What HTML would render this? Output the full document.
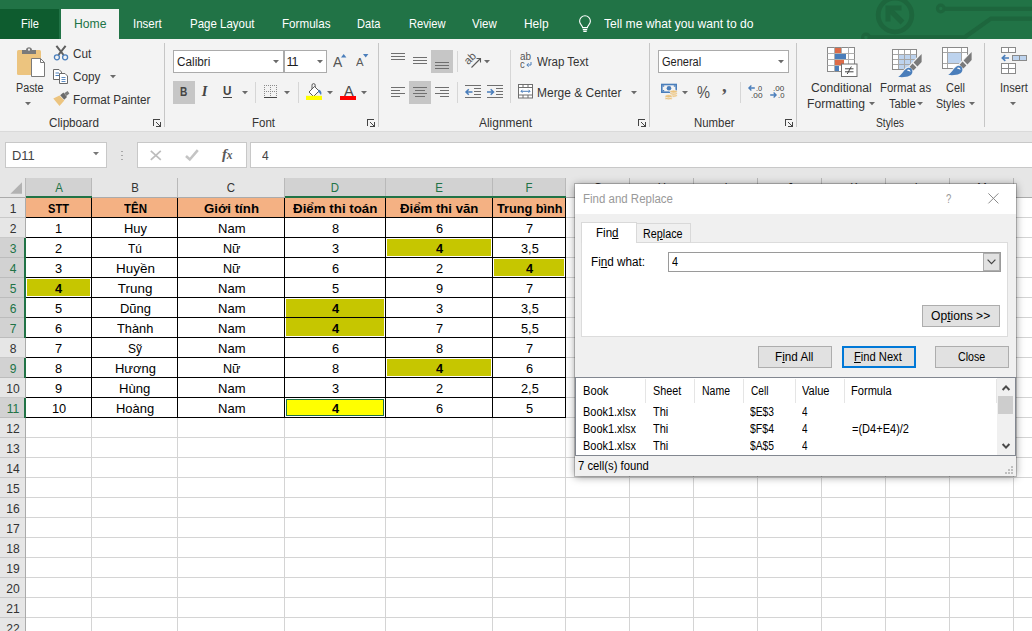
<!DOCTYPE html>
<html lang="vi"><head><meta charset="utf-8"><title>Excel - Find and Replace</title>
<style>
*{box-sizing:border-box;margin:0;padding:0}
html,body{width:1032px;height:631px;overflow:hidden;background:#fff}
body{position:relative;font-family:"Liberation Sans",sans-serif;font-size:12px;color:#262626}
.a{position:absolute;white-space:nowrap}
.t{position:absolute;white-space:nowrap;line-height:1;transform-origin:0 50%}
svg{overflow:visible}
u{text-decoration:underline;text-underline-offset:1px}
</style></head><body>
<div class="a" style="left:0px;top:0px;width:1032px;height:39px;background:#217346;"></div>
<svg class="a" style="left:856px;top:0px" width="176" height="39" viewBox="856 0 176 39" ><g fill="none" stroke="#1d663d">
<circle cx="895" cy="15" r="16.8" stroke-width="4.8"/>
<path d="M902.5 22.5 L890 10" stroke-width="5.4"/><path d="M888 21.5 V8 H901.5" stroke-width="5"/>
<circle cx="940.8" cy="8.5" r="3.3" stroke-width="3.2"/><path d="M944.5 8.8 H1032" stroke-width="4.2"/>
<circle cx="866" cy="37.6" r="3.4" stroke-width="3.2"/><path d="M869.5 37.3 H964.6 L991 18.6 H1032" stroke-width="4.2"/>
</g></svg>
<div class="a" style="left:0px;top:9px;width:59px;height:30px;background:#0e5c2f;"></div>
<div class="a" style="left:61px;top:9px;width:58px;height:30px;background:#f3f3f3;"></div>
<span class="t" style="left:20.50px;top:17.00px;font-size:13px;color:#fff;transform:scaleX(0.8505);">File</span>
<span class="t" style="left:73.70px;top:17.00px;font-size:13px;color:#217346;transform:scaleX(0.9363);">Home</span>
<span class="t" style="left:133.30px;top:17.00px;font-size:13px;color:#fff;transform:scaleX(0.8831);">Insert</span>
<span class="t" style="left:189.50px;top:17.00px;font-size:13px;color:#fff;transform:scaleX(0.8836);">Page Layout</span>
<span class="t" style="left:281.50px;top:17.00px;font-size:13px;color:#fff;transform:scaleX(0.8947);">Formulas</span>
<span class="t" style="left:357.30px;top:17.00px;font-size:13px;color:#fff;transform:scaleX(0.8511);">Data</span>
<span class="t" style="left:408.70px;top:17.00px;font-size:13px;color:#fff;transform:scaleX(0.8560);">Review</span>
<span class="t" style="left:472.30px;top:17.00px;font-size:13px;color:#fff;transform:scaleX(0.8837);">View</span>
<span class="t" style="left:524.30px;top:17.00px;font-size:13px;color:#fff;transform:scaleX(0.9171);">Help</span>
<span class="t" style="left:604.30px;top:17.00px;font-size:13px;color:#fff;transform:scaleX(0.9319);">Tell me what you want to do</span>
<svg class="a" style="left:577px;top:15px" width="16" height="18" viewBox="0 0 16 18" ><path d="M5.6 12.6 C5.6 10.6 2.6 9.2 2.6 6.2 A5.4 5.4 0 0 1 13.4 6.2 C13.4 9.2 10.4 10.6 10.4 12.6 Z M5.8 14.6 H10.2 M6.3 16.4 H9.7" fill="none" stroke="#fff" stroke-width="1.1"/></svg>
<div class="a" style="left:0px;top:39px;width:1032px;height:92px;background:#f3f3f3;"></div>
<div class="a" style="left:0px;top:131px;width:1032px;height:66px;background:#e6e6e6;border-top:1px solid #dadada;"></div>
<div class="a" style="left:164px;top:43px;width:1px;height:84px;background:#c6c6c6;"></div>
<div class="a" style="left:378px;top:43px;width:1px;height:84px;background:#c6c6c6;"></div>
<div class="a" style="left:649px;top:43px;width:1px;height:84px;background:#c6c6c6;"></div>
<div class="a" style="left:796px;top:43px;width:1px;height:84px;background:#c6c6c6;"></div>
<div class="a" style="left:984px;top:43px;width:1px;height:84px;background:#c6c6c6;"></div>
<div class="a" style="left:255px;top:82px;width:1px;height:21px;background:#d6d6d6;"></div>
<div class="a" style="left:298px;top:82px;width:1px;height:21px;background:#d6d6d6;"></div>
<div class="a" style="left:457px;top:51px;width:1px;height:21px;background:#d6d6d6;"></div>
<div class="a" style="left:457px;top:82px;width:1px;height:21px;background:#d6d6d6;"></div>
<div class="a" style="left:510px;top:50px;width:1px;height:53px;background:#d6d6d6;"></div>
<div class="a" style="left:740px;top:82px;width:1px;height:21px;background:#d6d6d6;"></div>
<span class="t" style="left:48.70px;top:116.75px;font-size:12.5px;color:#333;transform:scaleX(0.9346);">Clipboard</span>
<span class="t" style="left:251.70px;top:116.75px;font-size:12.5px;color:#333;transform:scaleX(0.9200);">Font</span>
<span class="t" style="left:479.00px;top:116.75px;font-size:12.5px;color:#333;transform:scaleX(0.9539);">Alignment</span>
<span class="t" style="left:694.00px;top:116.75px;font-size:12.5px;color:#333;transform:scaleX(0.9114);">Number</span>
<span class="t" style="left:876.00px;top:116.75px;font-size:12.5px;color:#333;transform:scaleX(0.8220);">Styles</span>
<svg class="a" style="left:153px;top:119px" width="8" height="8" viewBox="0 0 8 8" ><g fill="#444" shape-rendering="crispEdges"><rect x="0" y="0" width="7" height="1"/><rect x="0" y="0" width="1" height="7"/><rect x="7" y="3" width="1" height="5"/><rect x="3" y="7" width="5" height="1"/><rect x="3" y="3" width="1" height="1"/><rect x="4" y="4" width="1" height="1"/><rect x="5" y="5" width="1" height="1"/><rect x="6" y="6" width="1" height="1"/></g></svg>
<svg class="a" style="left:367px;top:119px" width="8" height="8" viewBox="0 0 8 8" ><g fill="#444" shape-rendering="crispEdges"><rect x="0" y="0" width="7" height="1"/><rect x="0" y="0" width="1" height="7"/><rect x="7" y="3" width="1" height="5"/><rect x="3" y="7" width="5" height="1"/><rect x="3" y="3" width="1" height="1"/><rect x="4" y="4" width="1" height="1"/><rect x="5" y="5" width="1" height="1"/><rect x="6" y="6" width="1" height="1"/></g></svg>
<svg class="a" style="left:638px;top:119px" width="8" height="8" viewBox="0 0 8 8" ><g fill="#444" shape-rendering="crispEdges"><rect x="0" y="0" width="7" height="1"/><rect x="0" y="0" width="1" height="7"/><rect x="7" y="3" width="1" height="5"/><rect x="3" y="7" width="5" height="1"/><rect x="3" y="3" width="1" height="1"/><rect x="4" y="4" width="1" height="1"/><rect x="5" y="5" width="1" height="1"/><rect x="6" y="6" width="1" height="1"/></g></svg>
<svg class="a" style="left:785px;top:119px" width="8" height="8" viewBox="0 0 8 8" ><g fill="#444" shape-rendering="crispEdges"><rect x="0" y="0" width="7" height="1"/><rect x="0" y="0" width="1" height="7"/><rect x="7" y="3" width="1" height="5"/><rect x="3" y="7" width="5" height="1"/><rect x="3" y="3" width="1" height="1"/><rect x="4" y="4" width="1" height="1"/><rect x="5" y="5" width="1" height="1"/><rect x="6" y="6" width="1" height="1"/></g></svg>
<svg class="a" style="left:16px;top:46px" width="30" height="32" viewBox="0 0 30 32" ><rect x="1" y="4" width="24" height="25" rx="1.5" fill="#ecc47f"/>
<path d="M6 4 H10 C10 0.4 16 0.4 16 4 H20 V8 H6 Z" fill="#7a7a7a"/><circle cx="13" cy="3.7" r="1.1" fill="#f3f3f3"/>
<path d="M15.5 12.5 H24.5 L28.5 16.5 V30.5 H15.5 Z" fill="#fff" stroke="#7a7a7a" stroke-width="1"/><path d="M24.5 12.5 V16.5 H28.5" fill="none" stroke="#7a7a7a" stroke-width="1"/></svg>
<span class="t" style="left:15.50px;top:81.75px;font-size:12.5px;color:#333;transform:scaleX(0.8611);">Paste</span>
<svg class="a" style="left:25.30px;top:101.70px" width="6" height="3.2" viewBox="0 0 6 3.2"><path d="M0 0 H6 L3.0 3.2 Z" fill="#6a6a6a"/></svg>
<svg class="a" style="left:53px;top:45px" width="16" height="18" viewBox="0 0 16 18" ><path d="M3.4 0.8 L10.6 10 M12.6 0.8 L5.4 10" stroke="#5e5e5e" stroke-width="2" fill="none"/>
<circle cx="3.9" cy="12.3" r="2.5" fill="none" stroke="#4a7ebb" stroke-width="1.3"/><circle cx="12.1" cy="12.3" r="2.5" fill="none" stroke="#4a7ebb" stroke-width="1.3"/></svg>
<span class="t" style="left:72.50px;top:47.75px;font-size:12.5px;color:#333;transform:scaleX(0.9415);">Cut</span>
<svg class="a" style="left:53px;top:69px" width="16" height="15" viewBox="0 0 16 15" ><path d="M0.5 0.5 H6 L8.5 3 V10.5 H0.5 Z" fill="#fff" stroke="#6a6a6a"/><path d="M2.5 4 H6 M2.5 6.5 H6" stroke="#4a7ebb"/>
<path d="M6.5 4.5 H12 L14.5 7 V14.5 H6.5 Z" fill="#fff" stroke="#6a6a6a"/><path d="M8.5 8.5 H12.5 M8.5 10.5 H12.5 M8.5 12.5 H12.5" stroke="#4a7ebb" stroke-width="0.9"/></svg>
<span class="t" style="left:72.50px;top:70.75px;font-size:12.5px;color:#333;transform:scaleX(0.9422);">Copy</span>
<svg class="a" style="left:109.50px;top:75.10px" width="6" height="3.2" viewBox="0 0 6 3.2"><path d="M0 0 H6 L3.0 3.2 Z" fill="#6a6a6a"/></svg>
<svg class="a" style="left:53px;top:91px" width="17" height="15" viewBox="0 0 17 15" ><path d="M0.3 7.5 L6.5 4.5 L11.3 9.5 L6.5 15 Z" fill="#ecc47f"/><path d="M7.2 4.2 L10.4 1.6 L14 6 L11.2 8.8 Z" fill="#6a6a6a"/><path d="M11.2 2.2 L14.6 0 L16.4 2.4 L13.4 5 Z" fill="#7d7d7d"/></svg>
<span class="t" style="left:72.50px;top:93.75px;font-size:12.5px;color:#333;transform:scaleX(0.9373);">Format Painter</span>
<div class="a" style="left:173px;top:50px;width:111px;height:23px;background:#fff;border:1px solid #ababab;"></div>
<div class="a" style="left:284px;top:50px;width:43px;height:23px;background:#fff;border:1px solid #ababab;border-left:1px solid #ababab;"></div>
<span class="t" style="left:176.70px;top:55.75px;font-size:12.5px;color:#1e1e1e;transform:scaleX(0.9397);">Calibri</span>
<svg class="a" style="left:273.30px;top:60.10px" width="6" height="3.2" viewBox="0 0 6 3.2"><path d="M0 0 H6 L3.0 3.2 Z" fill="#6a6a6a"/></svg>
<span class="t" style="left:286.60px;top:55.75px;font-size:12.5px;color:#1e1e1e;letter-spacing:-1.2px;">11</span>
<svg class="a" style="left:316.50px;top:60.10px" width="6" height="3.2" viewBox="0 0 6 3.2"><path d="M0 0 H6 L3.0 3.2 Z" fill="#6a6a6a"/></svg>
<span class="t" style="left:333.40px;top:54.00px;font-size:15px;color:#555;transform:scaleX(0.9254);">A</span>
<svg class="a" style="left:341px;top:54px" width="6" height="4" viewBox="0 0 6 4" ><path d="M0 3.5 L2.7 0 L5.4 3.5 Z" fill="#4a7ebb"/></svg>
<span class="t" style="left:356.00px;top:57.25px;font-size:11.5px;color:#5a5a5a;transform:scaleX(0.9864);">A</span>
<svg class="a" style="left:363px;top:54px" width="6" height="4" viewBox="0 0 6 4" ><path d="M0 0 L5.4 0 L2.7 3.5 Z" fill="#4a7ebb"/></svg>
<div class="a" style="left:173px;top:81px;width:22px;height:23px;background:#c6c6c6;"></div>
<span class="t" style="left:180.00px;top:86.00px;font-size:12px;color:#444;transform:scaleX(0.8449);font-weight:bold;">B</span>
<span class="t" style="left:201.8px;top:84.13px;font-size:14.5px;color:#444;font-style:italic;font-weight:bold;font-family:'Liberation Serif',serif">I</span>
<span class="t" style="left:223.30px;top:84.75px;font-size:12.5px;color:#444;transform:scaleX(0.9333);font-weight:bold;">U</span>
<div class="a" style="left:223px;top:97px;width:9px;height:1px;background:#444;"></div>
<svg class="a" style="left:241.50px;top:91.10px" width="6" height="3.2" viewBox="0 0 6 3.2"><path d="M0 0 H6 L3.0 3.2 Z" fill="#6a6a6a"/></svg>
<svg class="a" style="left:264px;top:85px" width="14" height="13" viewBox="0 0 14 13" ><g stroke="#8c8c8c" stroke-width="1" stroke-dasharray="1 1" fill="none" shape-rendering="crispEdges"><path d="M0 0.5 H13 M0 6.5 H13 M0.5 0 V12 M6.5 0 V12 M12.5 0 V12"/></g><path d="M0 12.5 H13" stroke="#444" stroke-width="1" shape-rendering="crispEdges"/></svg>
<svg class="a" style="left:284.30px;top:91.10px" width="6" height="3.2" viewBox="0 0 6 3.2"><path d="M0 0 H6 L3.0 3.2 Z" fill="#6a6a6a"/></svg>
<svg class="a" style="left:306px;top:83px" width="17" height="18" viewBox="0 0 17 18" ><path d="M3 9 L8.5 3.5 L13 8 L7.5 13.5 Z" fill="#fff" stroke="#5a5a5a" stroke-width="1"/><path d="M6 6 V2.2 A1.6 1.6 0 0 1 9.2 2.2 V4.2" fill="none" stroke="#5a5a5a" stroke-width="1"/><path d="M12.5 6.5 C15.5 7.5 16 10 15 12.2 C14 10.5 13.3 9.5 12 9 Z" fill="#4a7ebb"/><rect x="0" y="12.8" width="16" height="4.2" fill="#ffff00"/></svg>
<svg class="a" style="left:327.30px;top:91.10px" width="6" height="3.2" viewBox="0 0 6 3.2"><path d="M0 0 H6 L3.0 3.2 Z" fill="#6a6a6a"/></svg>
<span class="t" style="left:343.60px;top:84.00px;font-size:14px;color:#4a4a4a;transform:scaleX(1.0341);">A</span>
<div class="a" style="left:340px;top:96px;width:16px;height:4px;background:#ff0000;"></div>
<svg class="a" style="left:361.30px;top:91.10px" width="6" height="3.2" viewBox="0 0 6 3.2"><path d="M0 0 H6 L3.0 3.2 Z" fill="#6a6a6a"/></svg>
<div class="a" style="left:391px;top:53px;width:14px;height:1px;background:#6f6f6f;"></div>
<div class="a" style="left:391px;top:56px;width:14px;height:1px;background:#6f6f6f;"></div>
<div class="a" style="left:391px;top:59px;width:14px;height:1px;background:#6f6f6f;"></div>
<div class="a" style="left:413px;top:57px;width:14px;height:1px;background:#6f6f6f;"></div>
<div class="a" style="left:413px;top:60px;width:14px;height:1px;background:#6f6f6f;"></div>
<div class="a" style="left:413px;top:63px;width:14px;height:1px;background:#6f6f6f;"></div>
<div class="a" style="left:431px;top:50px;width:22px;height:23px;background:#c6c6c6;"></div>
<div class="a" style="left:435px;top:62px;width:14px;height:1px;background:#6f6f6f;"></div>
<div class="a" style="left:435px;top:65px;width:14px;height:1px;background:#6f6f6f;"></div>
<div class="a" style="left:435px;top:68px;width:14px;height:1px;background:#6f6f6f;"></div>
<div class="a" style="left:391px;top:87px;width:14px;height:1px;background:#6f6f6f;"></div>
<div class="a" style="left:391px;top:90px;width:9px;height:1px;background:#6f6f6f;"></div>
<div class="a" style="left:391px;top:93px;width:14px;height:1px;background:#6f6f6f;"></div>
<div class="a" style="left:391px;top:96px;width:9px;height:1px;background:#6f6f6f;"></div>
<div class="a" style="left:409px;top:81px;width:22px;height:23px;background:#c6c6c6;"></div>
<div class="a" style="left:413px;top:87px;width:14px;height:1px;background:#6f6f6f;"></div>
<div class="a" style="left:415px;top:90px;width:10px;height:1px;background:#6f6f6f;"></div>
<div class="a" style="left:413px;top:93px;width:14px;height:1px;background:#6f6f6f;"></div>
<div class="a" style="left:415px;top:96px;width:10px;height:1px;background:#6f6f6f;"></div>
<div class="a" style="left:435px;top:87px;width:14px;height:1px;background:#6f6f6f;"></div>
<div class="a" style="left:440px;top:90px;width:9px;height:1px;background:#6f6f6f;"></div>
<div class="a" style="left:435px;top:93px;width:14px;height:1px;background:#6f6f6f;"></div>
<div class="a" style="left:440px;top:96px;width:9px;height:1px;background:#6f6f6f;"></div>
<span class="t" style="left:463.5px;top:53px;font-size:11px;color:#555;transform:rotate(-45deg);transform-origin:50% 50%">ab</span>
<svg class="a" style="left:465px;top:52px" width="17" height="17" viewBox="0 0 17 17" ><path d="M6.5 15.5 L15 7 M11.5 6.5 H15.5 V10.5" fill="none" stroke="#5a5a5a" stroke-width="1.1"/></svg>
<svg class="a" style="left:484.30px;top:60.10px" width="6" height="3.2" viewBox="0 0 6 3.2"><path d="M0 0 H6 L3.0 3.2 Z" fill="#6a6a6a"/></svg>
<div class="a" style="left:465px;top:85px;width:16px;height:1px;background:#6f6f6f;"></div>
<div class="a" style="left:474px;top:88px;width:7px;height:1px;background:#6f6f6f;"></div>
<div class="a" style="left:474px;top:91px;width:7px;height:1px;background:#6f6f6f;"></div>
<div class="a" style="left:474px;top:94px;width:7px;height:1px;background:#6f6f6f;"></div>
<div class="a" style="left:465px;top:97px;width:16px;height:1px;background:#6f6f6f;"></div>
<svg class="a" style="left:465px;top:87.5px" width="8" height="8" viewBox="0 0 8 8" ><path d="M7.5 4 H1 M3.8 1.2 L1 4 L3.8 6.8" stroke="#4a7ebb" stroke-width="1.5" fill="none"/></svg>
<div class="a" style="left:487px;top:85px;width:16px;height:1px;background:#6f6f6f;"></div>
<div class="a" style="left:496px;top:88px;width:7px;height:1px;background:#6f6f6f;"></div>
<div class="a" style="left:496px;top:91px;width:7px;height:1px;background:#6f6f6f;"></div>
<div class="a" style="left:496px;top:94px;width:7px;height:1px;background:#6f6f6f;"></div>
<div class="a" style="left:487px;top:97px;width:16px;height:1px;background:#6f6f6f;"></div>
<svg class="a" style="left:487px;top:87.5px" width="8" height="8" viewBox="0 0 8 8" ><path d="M0 4 H6.5 M3.7 1.2 L6.5 4 L3.7 6.8" stroke="#4a7ebb" stroke-width="1.5" fill="none"/></svg>
<span class="t" style="left:520.00px;top:51.50px;font-size:10px;color:#555;transform:scaleX(0.9910);">ab</span>
<span class="t" style="left:520.30px;top:59.50px;font-size:10px;color:#555;transform:scaleX(0.9400);">c</span>
<svg class="a" style="left:526px;top:62px" width="6" height="6" viewBox="0 0 6 6" ><path d="M5 0 V3 H1 M2.6 1.2 L0.8 3 L2.6 4.8" fill="none" stroke="#4a7ebb" stroke-width="1"/></svg>
<span class="t" style="left:537.30px;top:55.75px;font-size:12.5px;color:#333;transform:scaleX(0.9227);">Wrap Text</span>
<svg class="a" style="left:518px;top:84px" width="15" height="15" viewBox="0 0 15 15" ><rect x="0.5" y="0.5" width="14" height="13.5" fill="#fff" stroke="#6f6f6f"/><path d="M0.5 3.5 H14.5 M0.5 11 H14.5 M5 0.5 V3.5 M10 0.5 V3.5 M5 11 V14 M10 11 V14" stroke="#6f6f6f" fill="none"/><path d="M3 7.3 H12 M4.5 5.8 L3 7.3 L4.5 8.8 M10.5 5.8 L12 7.3 L10.5 8.8" stroke="#4a7ebb" stroke-width="1" fill="none"/></svg>
<span class="t" style="left:537.30px;top:86.75px;font-size:12.5px;color:#333;transform:scaleX(0.9575);">Merge &amp; Center</span>
<svg class="a" style="left:631.30px;top:91.10px" width="6" height="3.2" viewBox="0 0 6 3.2"><path d="M0 0 H6 L3.0 3.2 Z" fill="#6a6a6a"/></svg>
<div class="a" style="left:658px;top:50px;width:131px;height:23px;background:#fff;border:1px solid #ababab;"></div>
<span class="t" style="left:661.80px;top:55.75px;font-size:12.5px;color:#1e1e1e;transform:scaleX(0.8809);">General</span>
<svg class="a" style="left:778.30px;top:60.10px" width="6" height="3.2" viewBox="0 0 6 3.2"><path d="M0 0 H6 L3.0 3.2 Z" fill="#6a6a6a"/></svg>
<svg class="a" style="left:660px;top:83px" width="18" height="18" viewBox="0 0 18 18" ><rect x="1" y="0.7" width="16" height="9.3" fill="#4a7ebb"/><rect x="2.6" y="2.3" width="12.8" height="6.1" fill="#f3f3f3"/><ellipse cx="9" cy="5.3" rx="2.3" ry="2.2" fill="#4a7ebb"/><rect x="2.6" y="2.3" width="1.6" height="1.4" fill="#4a7ebb"/><rect x="13.8" y="2.3" width="1.6" height="1.4" fill="#4a7ebb"/><rect x="2.6" y="7" width="1.6" height="1.4" fill="#4a7ebb"/>
<g fill="#ecc47f" stroke="#f3f3f3" stroke-width="0.7"><ellipse cx="13.6" cy="12.6" rx="3.7" ry="1.6"/><ellipse cx="13.6" cy="10.6" rx="3.7" ry="1.6"/><ellipse cx="13.6" cy="8.6" rx="3.7" ry="1.6"/><ellipse cx="8.6" cy="15.2" rx="3.7" ry="1.6"/><ellipse cx="8.6" cy="13.2" rx="3.7" ry="1.6"/></g></svg>
<svg class="a" style="left:682.00px;top:91.10px" width="6" height="3.2" viewBox="0 0 6 3.2"><path d="M0 0 H6 L3.0 3.2 Z" fill="#6a6a6a"/></svg>
<span class="t" style="left:697.00px;top:83.75px;font-size:16.5px;color:#505050;transform:scaleX(0.8853);">%</span>
<span class="t" style="left:722px;top:76.3px;font-size:19px;color:#555;font-weight:bold;font-family:'Liberation Serif',serif">,</span>
<span class="t" style="left:756.00px;top:84.70px;font-size:7.6px;color:#3c3c3c;transform:scaleX(0.9770);">.0</span>
<span class="t" style="left:750.70px;top:91.70px;font-size:7.6px;color:#3c3c3c;transform:scaleX(1.0886);">.00</span>
<svg class="a" style="left:748.2px;top:85.2px" width="7" height="6" viewBox="0 0 7 6" ><path d="M6.8 3 H1 M3.4 0.5 L0.9 3 L3.4 5.5" stroke="#4a7ebb" stroke-width="1.3" fill="none"/></svg>
<span class="t" style="left:773.00px;top:84.70px;font-size:7.6px;color:#3c3c3c;transform:scaleX(1.0602);">.00</span>
<span class="t" style="left:777.80px;top:91.70px;font-size:7.6px;color:#3c3c3c;transform:scaleX(1.0085);">.0</span>
<svg class="a" style="left:770px;top:92.4px" width="7" height="6" viewBox="0 0 7 6" ><path d="M0.2 3 H6 M3.6 0.5 L6.1 3 L3.6 5.5" stroke="#4a7ebb" stroke-width="1.3" fill="none"/></svg>
<svg class="a" style="left:827px;top:47px" width="30" height="30" viewBox="0 0 30 30" ><rect x="0.5" y="0.5" width="27" height="24" fill="#fff" stroke="#8a8a8a"/><path d="M0.5 6.5 H27.5 M0.5 12.5 H27.5 M0.5 18.5 H27.5 M7.5 0.5 V24.5 M14.5 0.5 V24.5 M21.5 0.5 V24.5" stroke="#b0b0b0" fill="none"/>
<rect x="8" y="1" width="6" height="5" fill="#dd6b48"/><rect x="8" y="7" width="11" height="5" fill="#4a7ebb"/><rect x="8" y="13" width="9" height="5" fill="#dd6b48"/><rect x="8" y="19" width="4" height="5" fill="#4a7ebb"/>
<rect x="14.5" y="17" width="15.5" height="12.5" fill="#fff" stroke="#6f6f6f"/><path d="M18 21.8 H26.5 M18 24.8 H26.5 M24.3 19.5 L20.2 27" stroke="#444" stroke-width="1" fill="none"/></svg>
<span class="t" style="left:810.50px;top:81.75px;font-size:12.5px;color:#333;transform:scaleX(0.9718);">Conditional</span>
<span class="t" style="left:807.30px;top:97.75px;font-size:12.5px;color:#333;transform:scaleX(0.9707);">Formatting</span>
<svg class="a" style="left:868.50px;top:101.90px" width="6" height="3.2" viewBox="0 0 6 3.2"><path d="M0 0 H6 L3.0 3.2 Z" fill="#6a6a6a"/></svg>
<svg class="a" style="left:892px;top:48px" width="30" height="30" viewBox="0 0 30 30" ><rect x="0.5" y="1.5" width="24" height="20" fill="#fff" stroke="#8a8a8a"/><rect x="6.5" y="6.5" width="18" height="15" fill="#bdd3ee"/><path d="M0.5 6.5 H24.5 M0.5 11.5 H24.5 M0.5 16.5 H24.5 M6.5 1.5 V21.5 M12.5 1.5 V21.5 M18.5 1.5 V21.5" stroke="#a6a6a6" fill="none"/><rect x="0.5" y="1.5" width="24" height="20" fill="none" stroke="#8a8a8a"/>
<path d="M21.6 14.6 L29.6 6 V14 L25.4 18.6 Z M17.6 18.8 L20.6 15.6 L24.4 19.4 L21.4 22.6 Z M6.2 29 C10 26.5 12 21.5 15.4 20 C18.4 19 20.8 21 20.4 24 C20 28 15 29.7 6.2 29 Z M21.5 23 L26.4 17.6 V23 Z" fill="#f3f3f3" stroke="#f3f3f3" stroke-width="2.4" stroke-linejoin="round"/><path d="M21.6 14.6 L29.6 6 V14 L25.4 18.6 Z" fill="#7a7a7a"/><path d="M17.6 18.8 L20.6 15.6 L24.4 19.4 L21.4 22.6 Z" fill="#7a7a7a"/><path d="M6.2 29 C10 26.5 12 21.5 15.4 20 C18.4 19 20.8 21 20.4 24 C20 28 15 29.7 6.2 29 Z" fill="#4a7ebb"/><path d="M14.8 22.2 C15.8 21 18.2 21.2 18.6 23.8 C17.2 23.2 16 22.8 14.8 22.2 Z" fill="#fff"/></svg>
<span class="t" style="left:879.70px;top:81.75px;font-size:12.5px;color:#333;transform:scaleX(0.9084);">Format as</span>
<span class="t" style="left:888.50px;top:97.75px;font-size:12.5px;color:#333;transform:scaleX(0.8971);">Table</span>
<svg class="a" style="left:917.00px;top:101.90px" width="6" height="3.2" viewBox="0 0 6 3.2"><path d="M0 0 H6 L3.0 3.2 Z" fill="#6a6a6a"/></svg>
<svg class="a" style="left:942px;top:47px" width="30" height="30" viewBox="0 0 30 30" ><rect x="0.5" y="0.5" width="25" height="21" fill="#fff" stroke="#8a8a8a"/><path d="M0.5 5.5 H25.5 M0.5 16.5 H25.5 M5.5 0.5 V21.5 M19.5 0.5 V21.5" stroke="#a6a6a6" fill="none"/><rect x="6" y="6" width="13" height="10" fill="#bdd3ee"/><rect x="0.5" y="0.5" width="25" height="21" fill="none" stroke="#8a8a8a"/>
<path d="M21.6 13.6 L29.6 5 V13 L25.4 17.6 Z M17.6 17.8 L20.6 14.6 L24.4 18.4 L21.4 21.6 Z M6.2 28 C10 25.5 12 20.5 15.4 19 C18.4 18 20.8 20 20.4 23 C20 27 15 28.7 6.2 28 Z M21.5 22 L26.4 16.6 V22 Z" fill="#f3f3f3" stroke="#f3f3f3" stroke-width="2.4" stroke-linejoin="round"/><path d="M21.6 13.6 L29.6 5 V13 L25.4 17.6 Z" fill="#7a7a7a"/><path d="M17.6 17.8 L20.6 14.6 L24.4 18.4 L21.4 21.6 Z" fill="#7a7a7a"/><path d="M6.2 28 C10 25.5 12 20.5 15.4 19 C18.4 18 20.8 20 20.4 23 C20 27 15 28.7 6.2 28 Z" fill="#4a7ebb"/><path d="M14.8 21.2 C15.8 20 18.2 20.2 18.6 22.8 C17.2 22.2 16 21.8 14.8 21.2 Z" fill="#fff"/></svg>
<span class="t" style="left:945.80px;top:81.75px;font-size:12.5px;color:#333;transform:scaleX(0.8765);">Cell</span>
<span class="t" style="left:936.00px;top:97.75px;font-size:12.5px;color:#333;transform:scaleX(0.8514);">Styles</span>
<svg class="a" style="left:968.50px;top:101.90px" width="6" height="3.2" viewBox="0 0 6 3.2"><path d="M0 0 H6 L3.0 3.2 Z" fill="#6a6a6a"/></svg>
<svg class="a" style="left:1001px;top:47px" width="26" height="27" viewBox="0 0 26 27" ><g fill="#fff" stroke="#8a8a8a"><rect x="0.5" y="0.5" width="14" height="5"/><rect x="0.5" y="16.5" width="14" height="10"/><rect x="11.5" y="8.5" width="14" height="5" fill="#bdd3ee"/></g><path d="M7.5 0.5 V5.5 M7.5 16.5 V26.5 M0.5 21.5 H14.5 M18.5 8.5 V13.5" stroke="#8a8a8a" fill="none"/><path d="M8 11 H1.5 M4.3 8.2 L1.3 11 L4.3 13.8" stroke="#4a7ebb" stroke-width="1.6" fill="none"/></svg>
<span class="t" style="left:999.70px;top:81.75px;font-size:12.5px;color:#333;transform:scaleX(0.8896);">Insert</span>
<svg class="a" style="left:1009.80px;top:101.90px" width="6" height="3.2" viewBox="0 0 6 3.2"><path d="M0 0 H6 L3.0 3.2 Z" fill="#6a6a6a"/></svg>
<div class="a" style="left:5px;top:142px;width:102px;height:26px;background:#fff;border:1px solid #c8c8c8;"></div>
<span class="t" style="left:11.70px;top:149.75px;font-size:12.5px;color:#444;transform:scaleX(1.0364);">D11</span>
<svg class="a" style="left:93.30px;top:152.20px" width="6" height="3.2" viewBox="0 0 6 3.2"><path d="M0 0 H6 L3.0 3.2 Z" fill="#777"/></svg>
<div class="a" style="left:121px;top:150.5px;width:1.5px;height:1.5px;background:#a8a8a8;"></div>
<div class="a" style="left:121px;top:154.5px;width:1.5px;height:1.5px;background:#a8a8a8;"></div>
<div class="a" style="left:121px;top:158.5px;width:1.5px;height:1.5px;background:#a8a8a8;"></div>
<div class="a" style="left:137px;top:142px;width:110px;height:26px;background:#fff;border:1px solid #c8c8c8;"></div>
<svg class="a" style="left:150px;top:150px" width="12" height="11" viewBox="0 0 12 11" ><path d="M0.8 0.8 L10.8 9.8 M10.8 0.8 L0.8 9.8" stroke="#bdbdbd" stroke-width="1.7" fill="none"/></svg>
<svg class="a" style="left:185px;top:149px" width="14" height="12" viewBox="0 0 14 12" ><path d="M1 7 L4.8 10.5 L12.8 1.2" stroke="#c4c4c4" stroke-width="2.6" fill="none"/></svg>
<span class="t" style="left:222px;top:146.5px;font-size:15px;color:#5a5a5a;font-style:italic;font-weight:bold;font-family:'Liberation Serif',serif;letter-spacing:-0.3px">f<span style="font-size:11.5px">x</span></span>
<div class="a" style="left:250px;top:142px;width:790px;height:26px;background:#fff;border:1px solid #c8c8c8;"></div>
<span class="t" style="left:262.00px;top:149.75px;font-size:12.5px;color:#444;transform:scaleX(0.9658);">4</span>
<div class="a" style="left:26px;top:198px;width:1006px;height:433px;background:#fff;"></div>
<div class="a" style="left:26px;top:217px;width:1006px;height:1px;background:#d4d4d4;"></div>
<div class="a" style="left:26px;top:237px;width:1006px;height:1px;background:#d4d4d4;"></div>
<div class="a" style="left:26px;top:257px;width:1006px;height:1px;background:#d4d4d4;"></div>
<div class="a" style="left:26px;top:277px;width:1006px;height:1px;background:#d4d4d4;"></div>
<div class="a" style="left:26px;top:297px;width:1006px;height:1px;background:#d4d4d4;"></div>
<div class="a" style="left:26px;top:317px;width:1006px;height:1px;background:#d4d4d4;"></div>
<div class="a" style="left:26px;top:337px;width:1006px;height:1px;background:#d4d4d4;"></div>
<div class="a" style="left:26px;top:357px;width:1006px;height:1px;background:#d4d4d4;"></div>
<div class="a" style="left:26px;top:377px;width:1006px;height:1px;background:#d4d4d4;"></div>
<div class="a" style="left:26px;top:397px;width:1006px;height:1px;background:#d4d4d4;"></div>
<div class="a" style="left:26px;top:417px;width:1006px;height:1px;background:#d4d4d4;"></div>
<div class="a" style="left:26px;top:437px;width:1006px;height:1px;background:#d4d4d4;"></div>
<div class="a" style="left:26px;top:457px;width:1006px;height:1px;background:#d4d4d4;"></div>
<div class="a" style="left:26px;top:477px;width:1006px;height:1px;background:#d4d4d4;"></div>
<div class="a" style="left:26px;top:497px;width:1006px;height:1px;background:#d4d4d4;"></div>
<div class="a" style="left:26px;top:517px;width:1006px;height:1px;background:#d4d4d4;"></div>
<div class="a" style="left:26px;top:537px;width:1006px;height:1px;background:#d4d4d4;"></div>
<div class="a" style="left:26px;top:557px;width:1006px;height:1px;background:#d4d4d4;"></div>
<div class="a" style="left:26px;top:577px;width:1006px;height:1px;background:#d4d4d4;"></div>
<div class="a" style="left:26px;top:597px;width:1006px;height:1px;background:#d4d4d4;"></div>
<div class="a" style="left:26px;top:617px;width:1006px;height:1px;background:#d4d4d4;"></div>
<div class="a" style="left:26px;top:637px;width:1006px;height:1px;background:#d4d4d4;"></div>
<div class="a" style="left:91px;top:198px;width:1px;height:433px;background:#d4d4d4;"></div>
<div class="a" style="left:177px;top:198px;width:1px;height:433px;background:#d4d4d4;"></div>
<div class="a" style="left:284px;top:198px;width:1px;height:433px;background:#d4d4d4;"></div>
<div class="a" style="left:385px;top:198px;width:1px;height:433px;background:#d4d4d4;"></div>
<div class="a" style="left:492px;top:198px;width:1px;height:433px;background:#d4d4d4;"></div>
<div class="a" style="left:565px;top:198px;width:1px;height:433px;background:#d4d4d4;"></div>
<div class="a" style="left:629px;top:198px;width:1px;height:433px;background:#d4d4d4;"></div>
<div class="a" style="left:693px;top:198px;width:1px;height:433px;background:#d4d4d4;"></div>
<div class="a" style="left:757px;top:198px;width:1px;height:433px;background:#d4d4d4;"></div>
<div class="a" style="left:821px;top:198px;width:1px;height:433px;background:#d4d4d4;"></div>
<div class="a" style="left:885px;top:198px;width:1px;height:433px;background:#d4d4d4;"></div>
<div class="a" style="left:949px;top:198px;width:1px;height:433px;background:#d4d4d4;"></div>
<div class="a" style="left:1013px;top:198px;width:1px;height:433px;background:#d4d4d4;"></div>
<div class="a" style="left:0px;top:178px;width:1032px;height:20px;background:#e6e6e6;"></div>
<div class="a" style="left:0px;top:197px;width:1032px;height:1px;background:#ababab;"></div>
<div class="a" style="left:26px;top:178px;width:65px;height:18px;background:#d2d2d2;"></div>
<div class="a" style="left:26px;top:196px;width:66px;height:2px;background:#217346;"></div>
<div class="a" style="left:91px;top:178px;width:1px;height:18px;background:#b9b9b9;"></div>
<span class="t" style="left:-1.10px;width:120px;text-align:center;top:181.00px;font-size:13px;color:#217346;transform:scaleX(0.88);transform-origin:50% 50%;">A</span>
<div class="a" style="left:177px;top:178px;width:1px;height:19px;background:#b9b9b9;"></div>
<span class="t" style="left:74.90px;width:120px;text-align:center;top:181.00px;font-size:13px;color:#333;transform:scaleX(0.88);transform-origin:50% 50%;">B</span>
<div class="a" style="left:284px;top:178px;width:1px;height:19px;background:#b9b9b9;"></div>
<span class="t" style="left:171.40px;width:120px;text-align:center;top:181.00px;font-size:13px;color:#333;transform:scaleX(0.88);transform-origin:50% 50%;">C</span>
<div class="a" style="left:285px;top:178px;width:100px;height:18px;background:#d2d2d2;"></div>
<div class="a" style="left:285px;top:196px;width:101px;height:2px;background:#217346;"></div>
<div class="a" style="left:385px;top:178px;width:1px;height:18px;background:#b9b9b9;"></div>
<span class="t" style="left:275.40px;width:120px;text-align:center;top:181.00px;font-size:13px;color:#217346;transform:scaleX(0.88);transform-origin:50% 50%;">D</span>
<div class="a" style="left:386px;top:178px;width:106px;height:18px;background:#d2d2d2;"></div>
<div class="a" style="left:386px;top:196px;width:107px;height:2px;background:#217346;"></div>
<div class="a" style="left:492px;top:178px;width:1px;height:18px;background:#b9b9b9;"></div>
<span class="t" style="left:379.40px;width:120px;text-align:center;top:181.00px;font-size:13px;color:#217346;transform:scaleX(0.88);transform-origin:50% 50%;">E</span>
<div class="a" style="left:493px;top:178px;width:72px;height:18px;background:#d2d2d2;"></div>
<div class="a" style="left:493px;top:196px;width:73px;height:2px;background:#217346;"></div>
<div class="a" style="left:565px;top:178px;width:1px;height:18px;background:#b9b9b9;"></div>
<span class="t" style="left:469.40px;width:120px;text-align:center;top:181.00px;font-size:13px;color:#217346;transform:scaleX(0.88);transform-origin:50% 50%;">F</span>
<div class="a" style="left:629px;top:178px;width:1px;height:19px;background:#b9b9b9;"></div>
<span class="t" style="left:537.90px;width:120px;text-align:center;top:181.00px;font-size:13px;color:#333;transform:scaleX(0.88);transform-origin:50% 50%;">G</span>
<div class="a" style="left:693px;top:178px;width:1px;height:19px;background:#b9b9b9;"></div>
<span class="t" style="left:601.90px;width:120px;text-align:center;top:181.00px;font-size:13px;color:#333;transform:scaleX(0.88);transform-origin:50% 50%;">H</span>
<div class="a" style="left:757px;top:178px;width:1px;height:19px;background:#b9b9b9;"></div>
<span class="t" style="left:665.90px;width:120px;text-align:center;top:181.00px;font-size:13px;color:#333;transform:scaleX(0.88);transform-origin:50% 50%;">I</span>
<div class="a" style="left:821px;top:178px;width:1px;height:19px;background:#b9b9b9;"></div>
<span class="t" style="left:729.90px;width:120px;text-align:center;top:181.00px;font-size:13px;color:#333;transform:scaleX(0.88);transform-origin:50% 50%;">J</span>
<div class="a" style="left:885px;top:178px;width:1px;height:19px;background:#b9b9b9;"></div>
<span class="t" style="left:793.90px;width:120px;text-align:center;top:181.00px;font-size:13px;color:#333;transform:scaleX(0.88);transform-origin:50% 50%;">K</span>
<div class="a" style="left:949px;top:178px;width:1px;height:19px;background:#b9b9b9;"></div>
<span class="t" style="left:857.90px;width:120px;text-align:center;top:181.00px;font-size:13px;color:#333;transform:scaleX(0.88);transform-origin:50% 50%;">L</span>
<div class="a" style="left:1013px;top:178px;width:1px;height:19px;background:#b9b9b9;"></div>
<span class="t" style="left:921.90px;width:120px;text-align:center;top:181.00px;font-size:13px;color:#333;transform:scaleX(0.88);transform-origin:50% 50%;">M</span>
<div class="a" style="left:1077px;top:178px;width:1px;height:19px;background:#b9b9b9;"></div>
<span class="t" style="left:985.90px;width:120px;text-align:center;top:181.00px;font-size:13px;color:#333;transform:scaleX(0.88);transform-origin:50% 50%;">N</span>
<div class="a" style="left:25px;top:178px;width:1px;height:20px;background:#b9b9b9;"></div>
<svg class="a" style="left:10px;top:182px" width="12" height="12" viewBox="0 0 12 12" ><path d="M12 0.2 V11.8 H0.4 Z" fill="#b2b2b2"/></svg>
<div class="a" style="left:0px;top:198px;width:25px;height:19px;background:#e6e6e6;"></div>
<div class="a" style="left:0px;top:217px;width:25px;height:1px;background:#c9c9c9;"></div>
<div class="a" style="left:25px;top:198px;width:1px;height:20px;background:#ababab;"></div>
<span class="t" style="left:-47.00px;width:120px;text-align:center;top:202.00px;font-size:13px;color:#333;transform:scaleX(0.93);transform-origin:50% 50%;">1</span>
<div class="a" style="left:0px;top:218px;width:25px;height:19px;background:#e6e6e6;"></div>
<div class="a" style="left:0px;top:237px;width:25px;height:1px;background:#c9c9c9;"></div>
<div class="a" style="left:25px;top:218px;width:1px;height:20px;background:#ababab;"></div>
<span class="t" style="left:-47.00px;width:120px;text-align:center;top:222.00px;font-size:13px;color:#333;transform:scaleX(0.93);transform-origin:50% 50%;">2</span>
<div class="a" style="left:0px;top:238px;width:25px;height:19px;background:#d2d2d2;"></div>
<div class="a" style="left:0px;top:257px;width:25px;height:1px;background:#bcbcbc;"></div>
<div class="a" style="left:24px;top:238px;width:2px;height:20px;background:#217346;"></div>
<span class="t" style="left:-47.00px;width:120px;text-align:center;top:242.00px;font-size:13px;color:#217346;transform:scaleX(0.93);transform-origin:50% 50%;">3</span>
<div class="a" style="left:0px;top:258px;width:25px;height:19px;background:#d2d2d2;"></div>
<div class="a" style="left:0px;top:277px;width:25px;height:1px;background:#bcbcbc;"></div>
<div class="a" style="left:24px;top:257px;width:2px;height:21px;background:#217346;"></div>
<span class="t" style="left:-47.00px;width:120px;text-align:center;top:262.00px;font-size:13px;color:#217346;transform:scaleX(0.93);transform-origin:50% 50%;">4</span>
<div class="a" style="left:0px;top:278px;width:25px;height:19px;background:#d2d2d2;"></div>
<div class="a" style="left:0px;top:297px;width:25px;height:1px;background:#bcbcbc;"></div>
<div class="a" style="left:24px;top:277px;width:2px;height:21px;background:#217346;"></div>
<span class="t" style="left:-47.00px;width:120px;text-align:center;top:282.00px;font-size:13px;color:#217346;transform:scaleX(0.93);transform-origin:50% 50%;">5</span>
<div class="a" style="left:0px;top:298px;width:25px;height:19px;background:#d2d2d2;"></div>
<div class="a" style="left:0px;top:317px;width:25px;height:1px;background:#bcbcbc;"></div>
<div class="a" style="left:24px;top:297px;width:2px;height:21px;background:#217346;"></div>
<span class="t" style="left:-47.00px;width:120px;text-align:center;top:302.00px;font-size:13px;color:#217346;transform:scaleX(0.93);transform-origin:50% 50%;">6</span>
<div class="a" style="left:0px;top:318px;width:25px;height:19px;background:#d2d2d2;"></div>
<div class="a" style="left:0px;top:337px;width:25px;height:1px;background:#bcbcbc;"></div>
<div class="a" style="left:24px;top:317px;width:2px;height:21px;background:#217346;"></div>
<span class="t" style="left:-47.00px;width:120px;text-align:center;top:322.00px;font-size:13px;color:#217346;transform:scaleX(0.93);transform-origin:50% 50%;">7</span>
<div class="a" style="left:0px;top:338px;width:25px;height:19px;background:#e6e6e6;"></div>
<div class="a" style="left:0px;top:357px;width:25px;height:1px;background:#c9c9c9;"></div>
<div class="a" style="left:25px;top:338px;width:1px;height:20px;background:#ababab;"></div>
<span class="t" style="left:-47.00px;width:120px;text-align:center;top:342.00px;font-size:13px;color:#333;transform:scaleX(0.93);transform-origin:50% 50%;">8</span>
<div class="a" style="left:0px;top:358px;width:25px;height:19px;background:#d2d2d2;"></div>
<div class="a" style="left:0px;top:377px;width:25px;height:1px;background:#bcbcbc;"></div>
<div class="a" style="left:24px;top:358px;width:2px;height:20px;background:#217346;"></div>
<span class="t" style="left:-47.00px;width:120px;text-align:center;top:362.00px;font-size:13px;color:#217346;transform:scaleX(0.93);transform-origin:50% 50%;">9</span>
<div class="a" style="left:0px;top:378px;width:25px;height:19px;background:#e6e6e6;"></div>
<div class="a" style="left:0px;top:397px;width:25px;height:1px;background:#c9c9c9;"></div>
<div class="a" style="left:25px;top:378px;width:1px;height:20px;background:#ababab;"></div>
<span class="t" style="left:-47.00px;width:120px;text-align:center;top:382.00px;font-size:13px;color:#333;transform:scaleX(0.93);transform-origin:50% 50%;">10</span>
<div class="a" style="left:0px;top:398px;width:25px;height:19px;background:#d2d2d2;"></div>
<div class="a" style="left:0px;top:417px;width:25px;height:1px;background:#bcbcbc;"></div>
<div class="a" style="left:24px;top:398px;width:2px;height:20px;background:#217346;"></div>
<span class="t" style="left:-47.00px;width:120px;text-align:center;top:402.00px;font-size:13px;color:#217346;transform:scaleX(0.93);transform-origin:50% 50%;">11</span>
<div class="a" style="left:0px;top:418px;width:25px;height:19px;background:#e6e6e6;"></div>
<div class="a" style="left:0px;top:437px;width:25px;height:1px;background:#c9c9c9;"></div>
<div class="a" style="left:25px;top:418px;width:1px;height:20px;background:#ababab;"></div>
<span class="t" style="left:-47.00px;width:120px;text-align:center;top:422.00px;font-size:13px;color:#333;transform:scaleX(0.93);transform-origin:50% 50%;">12</span>
<div class="a" style="left:0px;top:438px;width:25px;height:19px;background:#e6e6e6;"></div>
<div class="a" style="left:0px;top:457px;width:25px;height:1px;background:#c9c9c9;"></div>
<div class="a" style="left:25px;top:438px;width:1px;height:20px;background:#ababab;"></div>
<span class="t" style="left:-47.00px;width:120px;text-align:center;top:442.00px;font-size:13px;color:#333;transform:scaleX(0.93);transform-origin:50% 50%;">13</span>
<div class="a" style="left:0px;top:458px;width:25px;height:19px;background:#e6e6e6;"></div>
<div class="a" style="left:0px;top:477px;width:25px;height:1px;background:#c9c9c9;"></div>
<div class="a" style="left:25px;top:458px;width:1px;height:20px;background:#ababab;"></div>
<span class="t" style="left:-47.00px;width:120px;text-align:center;top:462.00px;font-size:13px;color:#333;transform:scaleX(0.93);transform-origin:50% 50%;">14</span>
<div class="a" style="left:0px;top:478px;width:25px;height:19px;background:#e6e6e6;"></div>
<div class="a" style="left:0px;top:497px;width:25px;height:1px;background:#c9c9c9;"></div>
<div class="a" style="left:25px;top:478px;width:1px;height:20px;background:#ababab;"></div>
<span class="t" style="left:-47.00px;width:120px;text-align:center;top:482.00px;font-size:13px;color:#333;transform:scaleX(0.93);transform-origin:50% 50%;">15</span>
<div class="a" style="left:0px;top:498px;width:25px;height:19px;background:#e6e6e6;"></div>
<div class="a" style="left:0px;top:517px;width:25px;height:1px;background:#c9c9c9;"></div>
<div class="a" style="left:25px;top:498px;width:1px;height:20px;background:#ababab;"></div>
<span class="t" style="left:-47.00px;width:120px;text-align:center;top:502.00px;font-size:13px;color:#333;transform:scaleX(0.93);transform-origin:50% 50%;">16</span>
<div class="a" style="left:0px;top:518px;width:25px;height:19px;background:#e6e6e6;"></div>
<div class="a" style="left:0px;top:537px;width:25px;height:1px;background:#c9c9c9;"></div>
<div class="a" style="left:25px;top:518px;width:1px;height:20px;background:#ababab;"></div>
<span class="t" style="left:-47.00px;width:120px;text-align:center;top:522.00px;font-size:13px;color:#333;transform:scaleX(0.93);transform-origin:50% 50%;">17</span>
<div class="a" style="left:0px;top:538px;width:25px;height:19px;background:#e6e6e6;"></div>
<div class="a" style="left:0px;top:557px;width:25px;height:1px;background:#c9c9c9;"></div>
<div class="a" style="left:25px;top:538px;width:1px;height:20px;background:#ababab;"></div>
<span class="t" style="left:-47.00px;width:120px;text-align:center;top:542.00px;font-size:13px;color:#333;transform:scaleX(0.93);transform-origin:50% 50%;">18</span>
<div class="a" style="left:0px;top:558px;width:25px;height:19px;background:#e6e6e6;"></div>
<div class="a" style="left:0px;top:577px;width:25px;height:1px;background:#c9c9c9;"></div>
<div class="a" style="left:25px;top:558px;width:1px;height:20px;background:#ababab;"></div>
<span class="t" style="left:-47.00px;width:120px;text-align:center;top:562.00px;font-size:13px;color:#333;transform:scaleX(0.93);transform-origin:50% 50%;">19</span>
<div class="a" style="left:0px;top:578px;width:25px;height:19px;background:#e6e6e6;"></div>
<div class="a" style="left:0px;top:597px;width:25px;height:1px;background:#c9c9c9;"></div>
<div class="a" style="left:25px;top:578px;width:1px;height:20px;background:#ababab;"></div>
<span class="t" style="left:-47.00px;width:120px;text-align:center;top:582.00px;font-size:13px;color:#333;transform:scaleX(0.93);transform-origin:50% 50%;">20</span>
<div class="a" style="left:0px;top:598px;width:25px;height:19px;background:#e6e6e6;"></div>
<div class="a" style="left:0px;top:617px;width:25px;height:1px;background:#c9c9c9;"></div>
<div class="a" style="left:25px;top:598px;width:1px;height:20px;background:#ababab;"></div>
<span class="t" style="left:-47.00px;width:120px;text-align:center;top:602.00px;font-size:13px;color:#333;transform:scaleX(0.93);transform-origin:50% 50%;">21</span>
<div class="a" style="left:0px;top:618px;width:25px;height:19px;background:#e6e6e6;"></div>
<div class="a" style="left:0px;top:637px;width:25px;height:1px;background:#c9c9c9;"></div>
<div class="a" style="left:25px;top:618px;width:1px;height:20px;background:#ababab;"></div>
<span class="t" style="left:-47.00px;width:120px;text-align:center;top:622.00px;font-size:13px;color:#333;transform:scaleX(0.93);transform-origin:50% 50%;">22</span>
<div class="a" style="left:26px;top:198px;width:540px;height:19px;background:#f4b183;"></div>
<span class="t" style="left:48.20px;top:201.80px;font-size:13.4px;color:#000;transform:scaleX(0.8292);font-weight:bold;">STT</span>
<span class="t" style="left:123.60px;top:201.80px;font-size:13.4px;color:#000;transform:scaleX(0.8582);font-weight:bold;">TÊN</span>
<span class="t" style="left:204.10px;top:201.80px;font-size:13.4px;color:#000;transform:scaleX(0.9878);font-weight:bold;">Giới tính</span>
<span class="t" style="left:293.35px;top:201.80px;font-size:13.4px;color:#000;transform:scaleX(0.9954);font-weight:bold;">Điểm thi toán</span>
<span class="t" style="left:400.40px;top:201.80px;font-size:13.4px;color:#000;transform:scaleX(0.9841);font-weight:bold;">Điểm thi văn</span>
<span class="t" style="left:496.80px;top:201.80px;font-size:13.4px;color:#000;transform:scaleX(0.9478);font-weight:bold;">Trung bình</span>
<span class="t" style="left:55.15px;top:221.80px;font-size:13.4px;color:#000;transform:scaleX(0.9550);">1</span>
<span class="t" style="left:123.60px;top:221.80px;font-size:13.4px;color:#000;transform:scaleX(0.9643);">Huy</span>
<span class="t" style="left:217.85px;top:221.80px;font-size:13.4px;color:#000;transform:scaleX(0.9726);">Nam</span>
<span class="t" style="left:332.05px;top:221.80px;font-size:13.4px;color:#000;transform:scaleX(0.9550);">8</span>
<span class="t" style="left:436.05px;top:221.80px;font-size:13.4px;color:#000;transform:scaleX(0.9550);">6</span>
<span class="t" style="left:526.05px;top:221.80px;font-size:13.4px;color:#000;transform:scaleX(0.9550);">7</span>
<span class="t" style="left:55.15px;top:241.80px;font-size:13.4px;color:#000;transform:scaleX(0.9550);">2</span>
<span class="t" style="left:128.20px;top:241.80px;font-size:13.4px;color:#000;transform:scaleX(0.8840);">Tú</span>
<span class="t" style="left:222.85px;top:241.80px;font-size:13.4px;color:#000;transform:scaleX(0.9395);">Nữ</span>
<span class="t" style="left:332.05px;top:241.80px;font-size:13.4px;color:#000;transform:scaleX(0.9550);">3</span>
<div class="a" style="left:387px;top:239px;width:104px;height:17px;background:#c6c600;"></div>
<span class="t" style="left:436.05px;top:241.80px;font-size:13.4px;color:#000;transform:scaleX(0.9550);font-weight:bold;">4</span>
<span class="t" style="left:520.71px;top:241.80px;font-size:13.4px;color:#000;transform:scaleX(0.9550);">3,5</span>
<span class="t" style="left:55.15px;top:261.80px;font-size:13.4px;color:#000;transform:scaleX(0.9550);">3</span>
<span class="t" style="left:115.65px;top:261.80px;font-size:13.4px;color:#000;transform:scaleX(1.0045);">Huyền</span>
<span class="t" style="left:222.85px;top:261.80px;font-size:13.4px;color:#000;transform:scaleX(0.9395);">Nữ</span>
<span class="t" style="left:332.05px;top:261.80px;font-size:13.4px;color:#000;transform:scaleX(0.9550);">6</span>
<span class="t" style="left:436.05px;top:261.80px;font-size:13.4px;color:#000;transform:scaleX(0.9550);">2</span>
<div class="a" style="left:494px;top:259px;width:70px;height:17px;background:#c6c600;"></div>
<span class="t" style="left:526.05px;top:261.80px;font-size:13.4px;color:#000;transform:scaleX(0.9550);font-weight:bold;">4</span>
<div class="a" style="left:27px;top:279px;width:63px;height:17px;background:#c6c600;"></div>
<span class="t" style="left:55.15px;top:281.80px;font-size:13.4px;color:#000;transform:scaleX(0.9550);font-weight:bold;">4</span>
<span class="t" style="left:117.85px;top:281.80px;font-size:13.4px;color:#000;">Trung</span>
<span class="t" style="left:217.85px;top:281.80px;font-size:13.4px;color:#000;transform:scaleX(0.9726);">Nam</span>
<span class="t" style="left:332.05px;top:281.80px;font-size:13.4px;color:#000;transform:scaleX(0.9550);">5</span>
<span class="t" style="left:436.05px;top:281.80px;font-size:13.4px;color:#000;transform:scaleX(0.9550);">9</span>
<span class="t" style="left:526.05px;top:281.80px;font-size:13.4px;color:#000;transform:scaleX(0.9550);">7</span>
<span class="t" style="left:55.15px;top:301.80px;font-size:13.4px;color:#000;transform:scaleX(0.9550);">5</span>
<span class="t" style="left:119.60px;top:301.80px;font-size:13.4px;color:#000;transform:scaleX(0.9680);">Dũng</span>
<span class="t" style="left:217.85px;top:301.80px;font-size:13.4px;color:#000;transform:scaleX(0.9726);">Nam</span>
<div class="a" style="left:286px;top:299px;width:98px;height:17px;background:#c6c600;"></div>
<span class="t" style="left:332.05px;top:301.80px;font-size:13.4px;color:#000;transform:scaleX(0.9550);font-weight:bold;">4</span>
<span class="t" style="left:436.05px;top:301.80px;font-size:13.4px;color:#000;transform:scaleX(0.9550);">3</span>
<span class="t" style="left:520.71px;top:301.80px;font-size:13.4px;color:#000;transform:scaleX(0.9550);">3,5</span>
<span class="t" style="left:55.15px;top:321.80px;font-size:13.4px;color:#000;transform:scaleX(0.9550);">6</span>
<span class="t" style="left:116.95px;top:321.80px;font-size:13.4px;color:#000;transform:scaleX(0.9555);">Thành</span>
<span class="t" style="left:217.85px;top:321.80px;font-size:13.4px;color:#000;transform:scaleX(0.9726);">Nam</span>
<div class="a" style="left:286px;top:319px;width:98px;height:17px;background:#c6c600;"></div>
<span class="t" style="left:332.05px;top:321.80px;font-size:13.4px;color:#000;transform:scaleX(0.9550);font-weight:bold;">4</span>
<span class="t" style="left:436.05px;top:321.80px;font-size:13.4px;color:#000;transform:scaleX(0.9550);">7</span>
<span class="t" style="left:520.71px;top:321.80px;font-size:13.4px;color:#000;transform:scaleX(0.9550);">5,5</span>
<span class="t" style="left:55.15px;top:341.80px;font-size:13.4px;color:#000;transform:scaleX(0.9550);">7</span>
<span class="t" style="left:128.10px;top:341.80px;font-size:13.4px;color:#000;transform:scaleX(0.8968);">Sỹ</span>
<span class="t" style="left:217.85px;top:341.80px;font-size:13.4px;color:#000;transform:scaleX(0.9726);">Nam</span>
<span class="t" style="left:332.05px;top:341.80px;font-size:13.4px;color:#000;transform:scaleX(0.9550);">6</span>
<span class="t" style="left:436.05px;top:341.80px;font-size:13.4px;color:#000;transform:scaleX(0.9550);">8</span>
<span class="t" style="left:526.05px;top:341.80px;font-size:13.4px;color:#000;transform:scaleX(0.9550);">7</span>
<span class="t" style="left:55.15px;top:361.80px;font-size:13.4px;color:#000;transform:scaleX(0.9550);">8</span>
<span class="t" style="left:114.60px;top:361.80px;font-size:13.4px;color:#000;transform:scaleX(0.9683);">Hương</span>
<span class="t" style="left:222.85px;top:361.80px;font-size:13.4px;color:#000;transform:scaleX(0.9395);">Nữ</span>
<span class="t" style="left:332.05px;top:361.80px;font-size:13.4px;color:#000;transform:scaleX(0.9550);">8</span>
<div class="a" style="left:387px;top:359px;width:104px;height:17px;background:#c6c600;"></div>
<span class="t" style="left:436.05px;top:361.80px;font-size:13.4px;color:#000;transform:scaleX(0.9550);font-weight:bold;">4</span>
<span class="t" style="left:526.05px;top:361.80px;font-size:13.4px;color:#000;transform:scaleX(0.9550);">6</span>
<span class="t" style="left:55.15px;top:381.80px;font-size:13.4px;color:#000;transform:scaleX(0.9550);">9</span>
<span class="t" style="left:119.45px;top:381.80px;font-size:13.4px;color:#000;transform:scaleX(0.9773);">Hùng</span>
<span class="t" style="left:217.85px;top:381.80px;font-size:13.4px;color:#000;transform:scaleX(0.9726);">Nam</span>
<span class="t" style="left:332.05px;top:381.80px;font-size:13.4px;color:#000;transform:scaleX(0.9550);">3</span>
<span class="t" style="left:436.05px;top:381.80px;font-size:13.4px;color:#000;transform:scaleX(0.9550);">2</span>
<span class="t" style="left:520.71px;top:381.80px;font-size:13.4px;color:#000;transform:scaleX(0.9550);">2,5</span>
<span class="t" style="left:51.60px;top:401.80px;font-size:13.4px;color:#000;transform:scaleX(0.9550);">10</span>
<span class="t" style="left:116.00px;top:401.80px;font-size:13.4px;color:#000;transform:scaleX(0.9680);">Hoàng</span>
<span class="t" style="left:217.85px;top:401.80px;font-size:13.4px;color:#000;transform:scaleX(0.9726);">Nam</span>
<div class="a" style="left:286px;top:399px;width:98px;height:17px;background:#ffff00;border:1px solid #217346;"></div>
<span class="t" style="left:332.05px;top:401.80px;font-size:13.4px;color:#000;transform:scaleX(0.9550);font-weight:bold;">4</span>
<span class="t" style="left:436.05px;top:401.80px;font-size:13.4px;color:#000;transform:scaleX(0.9550);">6</span>
<span class="t" style="left:526.05px;top:401.80px;font-size:13.4px;color:#000;transform:scaleX(0.9550);">5</span>
<div class="a" style="left:286px;top:316px;width:98px;height:3px;background:#c6c600;"></div>
<div class="a" style="left:26px;top:217px;width:540px;height:1px;background:#000;"></div>
<div class="a" style="left:26px;top:237px;width:540px;height:1px;background:#000;"></div>
<div class="a" style="left:26px;top:257px;width:540px;height:1px;background:#000;"></div>
<div class="a" style="left:26px;top:277px;width:540px;height:1px;background:#000;"></div>
<div class="a" style="left:26px;top:297px;width:540px;height:1px;background:#000;"></div>
<div class="a" style="left:26px;top:317px;width:540px;height:1px;background:#000;"></div>
<div class="a" style="left:26px;top:337px;width:540px;height:1px;background:#000;"></div>
<div class="a" style="left:26px;top:357px;width:540px;height:1px;background:#000;"></div>
<div class="a" style="left:26px;top:377px;width:540px;height:1px;background:#000;"></div>
<div class="a" style="left:26px;top:397px;width:540px;height:1px;background:#000;"></div>
<div class="a" style="left:26px;top:417px;width:540px;height:1px;background:#000;"></div>
<div class="a" style="left:91px;top:198px;width:1px;height:220px;background:#000;"></div>
<div class="a" style="left:177px;top:198px;width:1px;height:220px;background:#000;"></div>
<div class="a" style="left:284px;top:198px;width:1px;height:220px;background:#000;"></div>
<div class="a" style="left:385px;top:198px;width:1px;height:220px;background:#000;"></div>
<div class="a" style="left:492px;top:198px;width:1px;height:220px;background:#000;"></div>
<div class="a" style="left:565px;top:198px;width:1px;height:220px;background:#000;"></div>
<div class="a" style="left:575px;top:184px;width:441px;height:292px;background:#f0f0f0;box-shadow:0 0 0 1px rgba(0,0,0,.2),0 1px 8px rgba(0,0,0,.42)"></div>
<div class="a" style="left:575px;top:184px;width:441px;height:30px;background:#fff;"></div>
<span class="t" style="left:583.30px;top:192.75px;font-size:12.5px;color:#999;transform:scaleX(0.9184);">Find and Replace</span>
<span class="t" style="left:945.50px;top:192.00px;font-size:13px;color:#999;transform:scaleX(0.7346);">?</span>
<svg class="a" style="left:988px;top:193px" width="11" height="11" viewBox="0 0 11 11" ><path d="M0.4 0.4 L10.4 10.4 M10.4 0.4 L0.4 10.4" stroke="#8a8a8a" stroke-width="1" fill="none"/></svg>
<div class="a" style="left:581px;top:242px;width:427px;height:95px;background:#fff;border:1px solid #dcdcdc;"></div>
<div class="a" style="left:636px;top:223px;width:55px;height:20px;background:#f0f0f0;border:1px solid #d9d9d9;"></div>
<div class="a" style="left:581px;top:222px;width:56px;height:21px;background:#fff;border:1px solid #d9d9d9;border-bottom:none;"></div>
<span class="t" style="left:596.30px;top:227.00px;font-size:12px;color:#000;transform:scaleX(0.9640);">Fin<u>d</u></span>
<span class="t" style="left:643.30px;top:228.00px;font-size:12px;color:#000;transform:scaleX(0.8969);">Re<u>p</u>lace</span>
<span class="t" style="left:590.50px;top:256.00px;font-size:12px;color:#000;transform:scaleX(0.9751);">Fi<u>n</u>d what:</span>
<div class="a" style="left:668px;top:252px;width:333px;height:20px;background:#fff;border:1px solid #9a9a9a;"></div>
<span class="t" style="left:672.00px;top:256.00px;font-size:12px;color:#000;transform:scaleX(0.9009);">4</span>
<div class="a" style="left:983px;top:253px;width:17px;height:18px;background:#e1e1e1;border:1px solid #adadad;"></div>
<svg class="a" style="left:987px;top:259px" width="9" height="6" viewBox="0 0 9 6" ><path d="M0.6 0.6 L4.5 4.6 L8.4 0.6" stroke="#444" stroke-width="1.2" fill="none"/></svg>
<div class="a" style="left:922px;top:305px;width:78px;height:22px;background:#e1e1e1;border:1px solid #adadad;"></div>
<span class="t" style="left:930.50px;top:310.00px;font-size:12px;color:#000;transform:scaleX(1.0089);">Op<u>t</u>ions &gt;&gt;</span>
<div class="a" style="left:758px;top:346px;width:74px;height:22px;background:#e1e1e1;border:1px solid #adadad;"></div>
<span class="t" style="left:775.30px;top:351.00px;font-size:12px;color:#000;transform:scaleX(0.9756);">F<u>i</u>nd All</span>
<div class="a" style="left:842px;top:346px;width:74px;height:22px;background:#e1e1e1;border:2px solid #0078d7;"></div>
<span class="t" style="left:854.20px;top:351.00px;font-size:12px;color:#000;transform:scaleX(0.9307);"><u>F</u>ind Next</span>
<div class="a" style="left:935px;top:346px;width:74px;height:22px;background:#e1e1e1;border:1px solid #adadad;"></div>
<span class="t" style="left:958.30px;top:351.00px;font-size:12px;color:#000;transform:scaleX(0.8871);">Close</span>
<div class="a" style="left:575px;top:377px;width:441px;height:79px;background:#fff;border:1px solid #828790;"></div>
<div class="a" style="left:645px;top:379px;width:1px;height:24px;background:#e5e5e5;"></div>
<div class="a" style="left:694px;top:379px;width:1px;height:24px;background:#e5e5e5;"></div>
<div class="a" style="left:743px;top:379px;width:1px;height:24px;background:#e5e5e5;"></div>
<div class="a" style="left:795px;top:379px;width:1px;height:24px;background:#e5e5e5;"></div>
<div class="a" style="left:844px;top:379px;width:1px;height:24px;background:#e5e5e5;"></div>
<div class="a" style="left:996px;top:379px;width:1px;height:24px;background:#e5e5e5;"></div>
<span class="t" style="left:583.30px;top:385.00px;font-size:12px;color:#000;transform:scaleX(0.9300);">Book</span>
<span class="t" style="left:652.50px;top:385.00px;font-size:12px;color:#000;transform:scaleX(0.9018);">Sheet</span>
<span class="t" style="left:701.70px;top:385.00px;font-size:12px;color:#000;transform:scaleX(0.8739);">Name</span>
<span class="t" style="left:750.50px;top:385.00px;font-size:12px;color:#000;transform:scaleX(0.8454);">Cell</span>
<span class="t" style="left:802.00px;top:385.00px;font-size:12px;color:#000;transform:scaleX(0.9222);">Value</span>
<span class="t" style="left:851.30px;top:385.00px;font-size:12px;color:#000;transform:scaleX(0.9242);">Formula</span>
<span class="t" style="left:583.30px;top:406.00px;font-size:12px;color:#000;transform:scaleX(0.9118);">Book1.xlsx</span>
<span class="t" style="left:652.50px;top:406.00px;font-size:12px;color:#000;transform:scaleX(0.9173);">Thi</span>
<span class="t" style="left:750.00px;top:406.00px;font-size:12px;color:#000;transform:scaleX(0.8565);">$E$3</span>
<span class="t" style="left:802.00px;top:406.00px;font-size:12px;color:#000;transform:scaleX(0.8258);">4</span>
<span class="t" style="left:583.30px;top:423.00px;font-size:12px;color:#000;transform:scaleX(0.9118);">Book1.xlsx</span>
<span class="t" style="left:652.50px;top:423.00px;font-size:12px;color:#000;transform:scaleX(0.9173);">Thi</span>
<span class="t" style="left:750.00px;top:423.00px;font-size:12px;color:#000;transform:scaleX(0.8772);">$F$4</span>
<span class="t" style="left:802.00px;top:423.00px;font-size:12px;color:#000;transform:scaleX(0.8258);">4</span>
<span class="t" style="left:851.50px;top:423.00px;font-size:12px;color:#000;transform:scaleX(0.9188);">=(D4+E4)/2</span>
<span class="t" style="left:583.30px;top:440.00px;font-size:12px;color:#000;transform:scaleX(0.9118);">Book1.xlsx</span>
<span class="t" style="left:652.50px;top:440.00px;font-size:12px;color:#000;transform:scaleX(0.9173);">Thi</span>
<span class="t" style="left:750.00px;top:440.00px;font-size:12px;color:#000;transform:scaleX(0.8565);">$A$5</span>
<span class="t" style="left:802.00px;top:440.00px;font-size:12px;color:#000;transform:scaleX(0.8258);">4</span>
<div class="a" style="left:997px;top:378px;width:18px;height:77px;background:#f0f0f0;"></div>
<div class="a" style="left:998px;top:396px;width:15px;height:18px;background:#cdcdcd;"></div>
<svg class="a" style="left:1001.5px;top:385px" width="8" height="6" viewBox="0 0 8 6" ><path d="M0.6 5 L4 1.4 L7.4 5" stroke="#4a4a4a" stroke-width="2" fill="none"/></svg>
<svg class="a" style="left:1001.5px;top:442.5px" width="8" height="6" viewBox="0 0 8 6" ><path d="M0.6 1 L4 4.6 L7.4 1" stroke="#4a4a4a" stroke-width="2" fill="none"/></svg>
<span class="t" style="left:577.50px;top:460.00px;font-size:12px;color:#000;transform:scaleX(0.9395);">7 cell(s) found</span>
<div class="a" style="left:1011px;top:472px;width:2px;height:2px;background:#bfbfbf;"></div>
<div class="a" style="left:1008px;top:472px;width:2px;height:2px;background:#bfbfbf;"></div>
<div class="a" style="left:1005px;top:472px;width:2px;height:2px;background:#bfbfbf;"></div>
<div class="a" style="left:1011px;top:469px;width:2px;height:2px;background:#bfbfbf;"></div>
<div class="a" style="left:1008px;top:469px;width:2px;height:2px;background:#bfbfbf;"></div>
<div class="a" style="left:1011px;top:466px;width:2px;height:2px;background:#bfbfbf;"></div>
</body></html>
